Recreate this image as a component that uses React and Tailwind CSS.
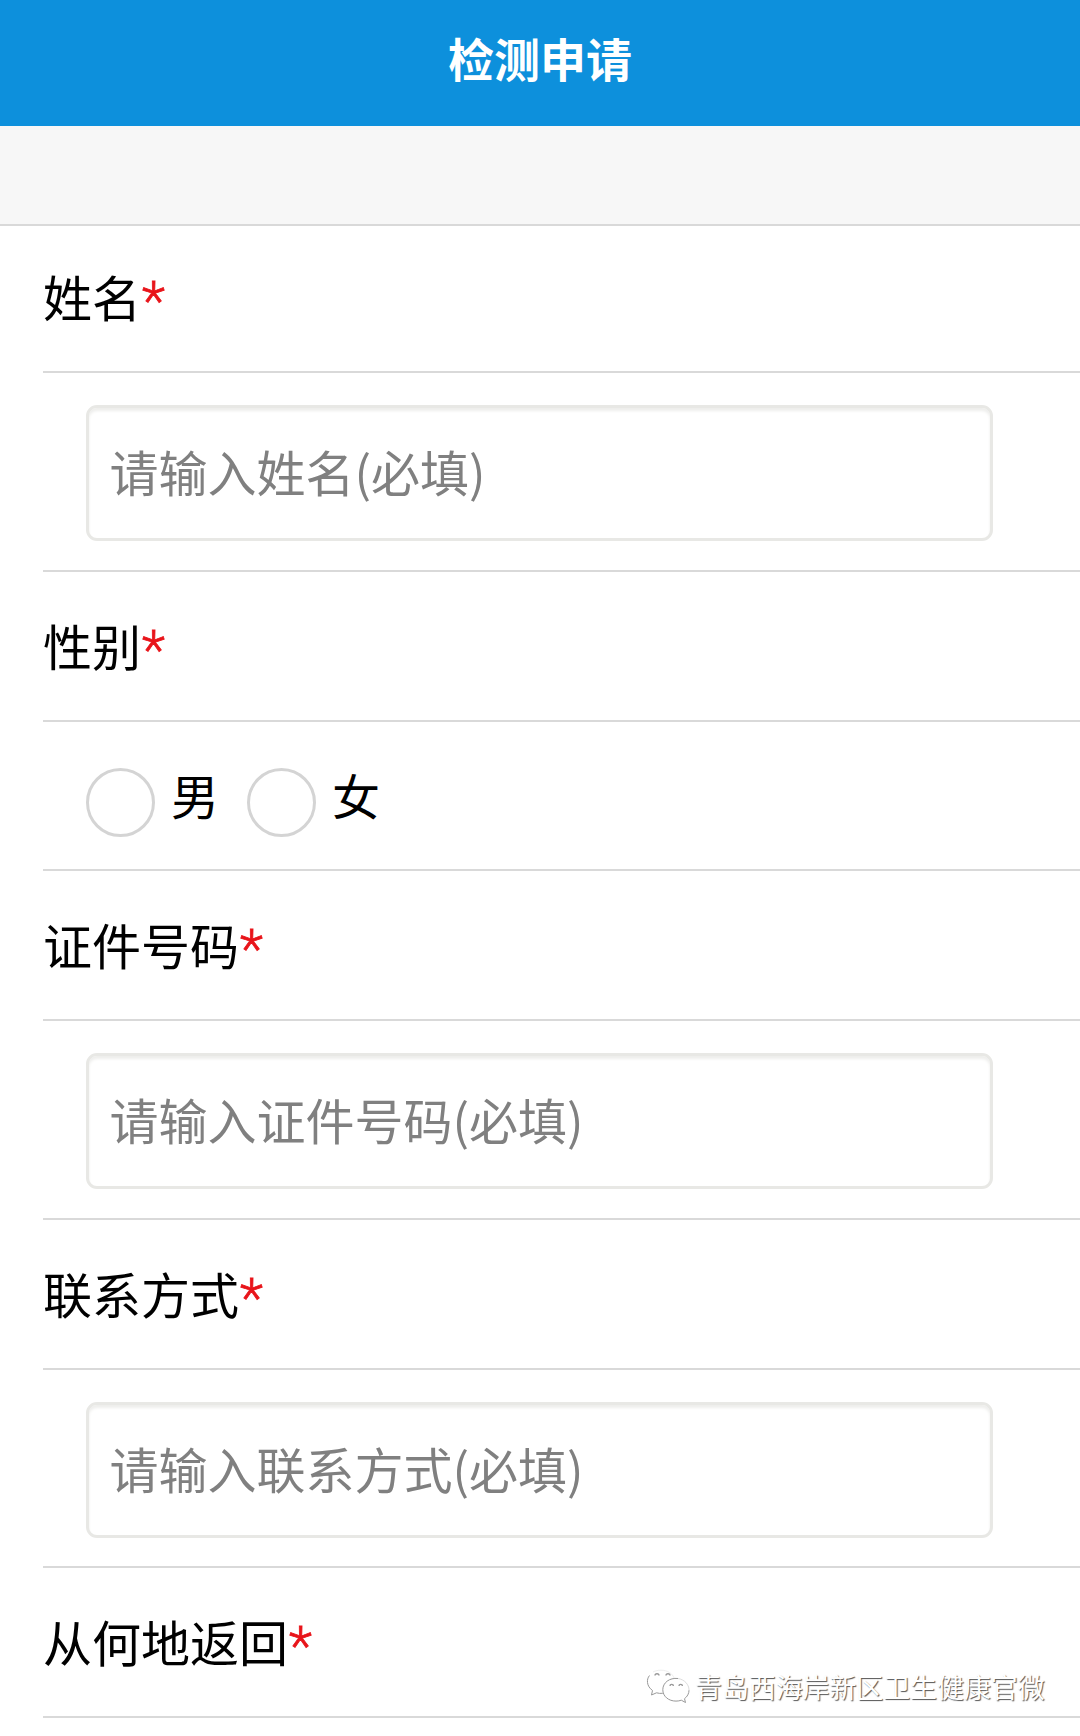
import React, { useState } from 'react';

const fields = [
  { name: 'name', label: '姓名', type: 'text', placeholder: '请输入姓名(必填)' },
  { name: 'gender', label: '性别', type: 'radio', options: ['男', '女'] },
  { name: 'idNumber', label: '证件号码', type: 'text', placeholder: '请输入证件号码(必填)' },
  { name: 'phone', label: '联系方式', type: 'text', placeholder: '请输入联系方式(必填)' },
  { name: 'origin', label: '从何地返回', type: 'label' },
];

const WechatIcon = () => (
  <svg
    width="44"
    height="36"
    viewBox="0 0 44 36"
    fill="none"
    stroke="#999999"
    strokeWidth="1"
    className="shrink-0"
  >
    {/* back bubble */}
    <path d="M3.500 6.500C1.800 8.600 1.200 11 1.500 13.500c.3 3 2 5.800 5 8L5.500 26l5-2.200c2.100.6 4 .8 6.300.5" />
    <path d="M7 3c2.500-1.300 5-1.800 8-1.800 6.500 0 11.600 3.400 13.200 8" stroke="#eeeeee" />
    {/* front bubble */}
    <path d="M32 9.500c-8.500-1-15.200 4.200-15.200 11.200 0 6.600 5.700 11.400 13.200 11.400 2 0 3.700-.3 5.300-.9l4.200 2.300-1-3.800c2.900-2.100 4.500-5.300 4.500-8.500" />
    <path d="M43 21c0-5.500-4.500-10.500-11-11.500" stroke="#dddddd" />
    {/* eyes */}
    <path
      d="M9 6.500a2 1.800 0 0 1 4 0M20 6.500a2 1.800 0 0 1 4 0M24 17a1.700 1.600 0 0 1 3.400 0M33 17a1.700 1.600 0 0 1 3.400 0"
      strokeWidth="1.400"
    />
  </svg>
);

const FieldLabel = ({ label, first }) => (
  <div
    className={`flex items-end border-b-2 border-[#d9d9d9] pb-[39px] text-[49px] leading-[72px] ${
      first ? 'h-[147px]' : 'h-[149.700px]'
    }`}
  >
    {label}
    <span className="-mb-[5px] ml-px font-['Roboto',sans-serif] text-[54px] font-light text-[#e8141a] [-webkit-text-stroke:0.8px_#e8141a]">
      *
    </span>
  </div>
);

const App = () => {
  const [form, setForm] = useState({});

  const handleChange = (e) => {
    setForm({ ...form, [e.target.name]: e.target.value });
  };

  return (
    <div className="relative h-[1736px] w-[1080px] overflow-hidden bg-white font-['Noto_Sans_CJK_SC',sans-serif] text-black">
      {/* Header */}
      <header className="flex h-[126px] items-center justify-center bg-[#0d90dc] pb-3">
        <h1 className="text-[46px] leading-[68px] font-bold text-white">检测申请</h1>
      </header>
      <div className="h-[100px] border-b-2 border-[#d9d9d9] bg-[#f7f7f7]" />

      {/* Form */}
      <form className="pl-[43px]">
        {fields.map((field, index) => (
          <div key={field.name}>
            <FieldLabel label={field.label} first={index === 0} />

            {field.type === 'text' && (
              <div className="h-[198.900px] border-b-2 border-[#d9d9d9] pt-8 pl-[43px]">
                <input
                  type="text"
                  name={field.name}
                  value={form[field.name] || ''}
                  onChange={handleChange}
                  placeholder={field.placeholder}
                  className="h-[136px] w-[907px] rounded-[11px] border-[3px] border-[#e8e8e5] px-[20.500px] pb-[5px] text-[49px] shadow-[inset_0_3px_3px_#eeeeec] outline-none placeholder:text-[#808080]"
                />
              </div>
            )}

            {field.type === 'radio' && (
              <div className="flex h-[149.700px] border-b-2 border-[#d9d9d9] pt-[46px] pl-[43px]">
                {field.options.map((option) => (
                  <label key={option} className="flex w-[161px]">
                    <input
                      type="radio"
                      name={field.name}
                      value={option}
                      checked={form[field.name] === option}
                      onChange={handleChange}
                      className="size-[69px] appearance-none rounded-full border-[3px] border-[#d4d4d4] checked:border-[#0d90dc]"
                    />
                    <span className="-mt-[8px] ml-4 text-[48px] leading-[68px]">{option}</span>
                  </label>
                ))}
              </div>
            )}
          </div>
        ))}
      </form>

      {/* Watermark */}
      <div className="absolute top-[1667px] left-[646px] flex items-center gap-[5px] text-[26.900px] leading-[40px] text-white [text-shadow:1px_1px_1px_#555]">
        <WechatIcon />
        <span className="whitespace-nowrap">青岛西海岸新区卫生健康官微</span>
      </div>
    </div>
  );
};

export default App;
